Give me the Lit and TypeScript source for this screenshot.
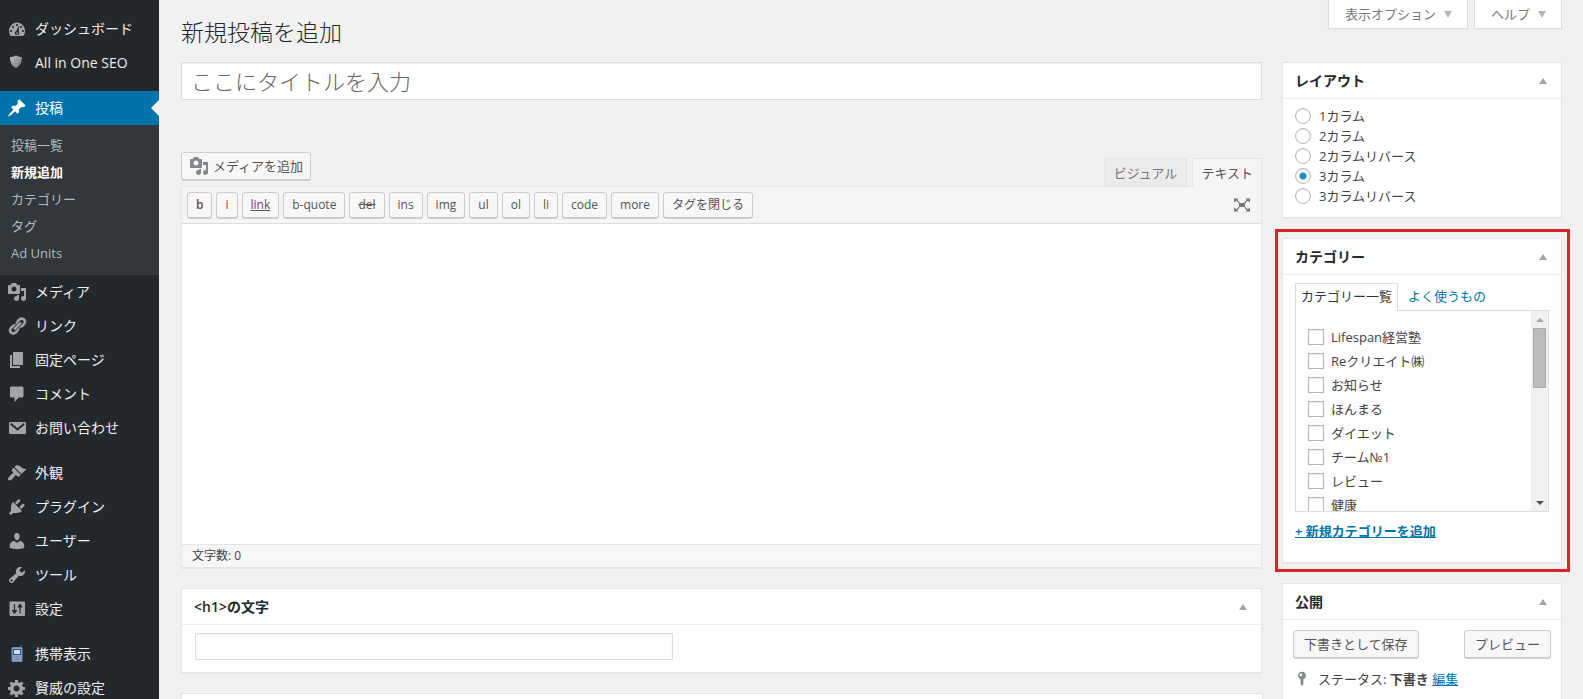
import { LitElement, html, svg, css, nothing } from "lit";
import { customElement, property, state } from "lit/decorators.js";
import { classMap } from "lit/directives/class-map.js";

const icons: Record<string, unknown> = {
  dashboard: svg`<path fill-rule="evenodd" d="M3.76 17h12.48c1.1-1.37 1.76-3.11 1.76-5 0-4.42-3.58-8.500-8-8.500s-8 4.080-8 8.500c0 1.890.66 3.630 1.760 5zM10 5c.55 0 1 .45 1 1s-.45 1-1 1-1-.45-1-1 .45-1 1-1zM6 7c.55 0 1 .45 1 1s-.45 1-1 1-1-.45-1-1 .45-1 1-1zm8 0c.55 0 1 .45 1 1s-.45 1-1 1-1-.45-1-1 .45-1 1-1zM4 11c.55 0 1 .45 1 1s-.45 1-1 1-1-.45-1-1 .45-1 1-1zm12 0c.55 0 1 .45 1 1s-.45 1-1 1-1-.45-1-1 .45-1 1-1zM12 6.500l-.2 6.300c.4.400.500.900.500 1.300 0 1.200-1 2-2.300 2s-2.200-.9-2.200-2c0-1 .6-1.600 1.400-1.900zM10 13.200a.9.900 0 1 0 0 1.800.9.900 0 0 0 0-1.800z"/>`,
  shield: svg`<defs><linearGradient id="sh" x1="0" y1="0" x2="1" y2="1"><stop offset="0" stop-color="#c4c4c4"/><stop offset="1" stop-color="#6c6c6c"/></linearGradient></defs><path fill="url(#sh)" stroke="#17191b" stroke-width="1" d="M8 .8c2 1.200 4.200 1.700 6.500 1.700.3 5.500-1.700 9.700-6.500 12.300C3.200 12.200 1.200 8 1.500 2.500 3.800 2.500 6 2 8 .8z"/>`,
  post: svg`<path d="M10.44 3.02l1.82-1.82 6.36 6.35-1.83 1.82c-1.05-.68-2.48-.57-3.41.36l-.75.75c-.92.93-1.04 2.35-.35 3.41l-1.83 1.82-2.41-2.41-2.8 2.79c-.42.42-3.38 2.71-3.8 2.29s1.86-3.39 2.28-3.81l2.79-2.79L4.1 9.36l1.83-1.82c1.05.69 2.48.57 3.4-.36l.75-.75c.93-.92 1.05-2.35.36-3.41z"/>`,
  media: svg`<path fill-rule="evenodd" d="M13 11V4c0-.55-.45-1-1-1h-1.67L9 1H5L3.67 3H2c-.55 0-1 .45-1 1v7c0 .55.45 1 1 1h10c.55 0 1-.45 1-1zM7 4.500c1.380 0 2.500 1.120 2.500 2.500S8.380 9.500 7 9.500 4.500 8.380 4.500 7 5.620 4.500 7 4.500zM14 6h5v10.500c0 1.380-1.120 2.500-2.500 2.500S14 17.880 14 16.500s1.120-2.500 2.500-2.500c.17 0 .34.02.5.05V9h-3V6zm-4 8.050V13h2v3.500c0 1.380-1.120 2.500-2.500 2.500S7 17.880 7 16.500 8.120 14 9.500 14c.17 0 .34.02.5.05z"/>`,
  link: svg`<path stroke="currentColor" stroke-width=".5" d="M17.74 2.76c1.68 1.69 1.68 4.41 0 6.1l-1.53 1.52c-1.12 1.12-2.7 1.47-4.14 1.09l2.62-2.61.76-.77.76-.76c.84-.84.84-2.2 0-3.04-.84-.85-2.2-.85-3.04 0l-.77.76-3.38 3.38c-.37-1.44-.02-3.02 1.1-4.14l1.52-1.53c1.69-1.68 4.42-1.68 6.1 0zM8.59 13.43l5.34-5.34c.42-.42.42-1.1 0-1.52-.44-.43-1.13-.39-1.53 0l-5.33 5.34c-.42.42-.42 1.1 0 1.52.44.43 1.13.39 1.52 0zm-.76 2.29l4.14-4.15c.38 1.44.03 3.02-1.09 4.14l-1.52 1.53c-1.69 1.68-4.41 1.68-6.1 0-1.68-1.68-1.68-4.42 0-6.1l1.53-1.52c1.12-1.12 2.7-1.47 4.14-1.1l-4.14 4.15c-.85.84-.85 2.2 0 3.05.84.84 2.2.84 3.04 0z"/>`,
  page: svg`<path d="M6 15V2h10v13H6zm-1 1h8v2H3V5h2v11z"/>`,
  comment: svg`<path d="M4.500 2.500h10.500c.8 0 1.500.7 1.500 1.500v8c0 .8-.7 1.500-1.500 1.500h-3.200L7.500 18v-4.500h-3C3.700 13.500 3 12.800 3 12V4c0-.8.700-1.500 1.500-1.500z"/>`,
  mail: svg`<rect x="2" y="4" width="17" height="12" rx="1.300"/><path d="M3.800 5.800l6.700 5.700 6.700-5.700" fill="none" stroke="#23282d" stroke-width="1.800"/>`,
  brush: svg`<path d="M14.48 11.06L7.41 3.99l1.5-1.5c.5-.56 2.3-.47 3.51.32 1.21.8 1.43 1.28 2.91 2.1 1.18.64 2.45 1.26 4.45.85zm-.71.71L6.7 4.7 4.93 6.47c-.39.39-.39 1.02 0 1.41l1.06 1.06c.39.39.39 1.03 0 1.42-.6.6-1.43 1.11-2.21 1.69-.35.26-.7.53-1.01.84C1.43 14.23.4 16.08 1.4 17.07c.99 1 2.84-.03 4.18-1.36.31-.31.58-.66.85-1.02.57-.78 1.08-1.61 1.69-2.21.39-.39 1.02-.39 1.41 0l1.06 1.06c.39.39 1.02.39 1.41 0z"/>`,
  plugin: svg`<path d="M13.11 4.36L9.87 7.6 8 5.73l3.24-3.24c.35-.34 1.05-.2 1.56.32.52.51.66 1.21.31 1.55zm-8 1.77l.91-1.12 9.01 9.01-1.19.84c-.71.71-2.63 1.16-3.82 1.16H6.14L4.9 17.26c-.59.59-1.54.59-2.12 0-.59-.58-.59-1.53 0-2.12l1.24-1.24v-3.88c0-1.13.4-3.19 1.09-3.89zm7.26 3.97l3.24-3.24c.34-.35 1.04-.21 1.55.31.52.51.66 1.21.31 1.55l-3.24 3.25z"/>`,
  user: svg`<path d="M10 9.250c-2.270 0-2.730-3.440-2.730-3.440C7 4.020 7.820 2 9.970 2c2.160 0 2.980 2.020 2.710 3.810 0 0-.41 3.440-2.680 3.440zm0 2.570L12.720 10c2.390 0 4.520 2.330 4.520 4.530v2.490s-3.650 1.130-7.240 1.130c-3.650 0-7.240-1.130-7.240-1.130v-2.490c0-2.250 1.940-4.480 4.470-4.480z"/>`,
  wrench: svg`<path fill-rule="evenodd" d="M16.68 9.77c-1.34 1.34-3.3 1.67-4.95.99l-5.41 6.52c-.99.99-2.59.99-3.58 0s-.99-2.59 0-3.57l6.52-5.42c-.68-1.65-.35-3.61.99-4.95 1.28-1.28 3.12-1.62 4.72-1.06l-2.89 2.89 2.82 2.82 2.86-2.87c.53 1.58.18 3.39-1.08 4.65zM3.81 16.21c.4.39 1.04.39 1.43 0 .4-.4.4-1.04 0-1.43-.39-.4-1.03-.4-1.43 0-.39.39-.39 1.03 0 1.43z"/>`,
  settings: svg`<rect x="2.500" y="2.500" width="15.500" height="14.500" rx="1"/><path d="M7.500 5v9.500M5 11.500h5M7.500 14.500l-2-3M7.500 14.500l2-3M13 5v9.500M10.700 8h4.600M13 5l-1.700 3M13 5l1.700 3" fill="none" stroke="#23282d" stroke-width="1.200"/>`,
  phone: svg`<path d="M13.300 1.500h1.500V5h-1.500z" fill="#3d6cb4"/><rect x="4.500" y="3" width="11" height="15" rx="1.500" fill="#6f8db8"/><rect x="5.500" y="4" width="9" height="13" rx="1" fill="#8ea5c6"/><rect x="6.500" y="5.500" width="7" height="5" fill="#d4dfec" stroke="#31527f" stroke-width="1"/><path d="M7 13h6M7 15.300h6" stroke="#7189ad" stroke-width="1.200"/>`,
  gear: svg`<path fill-rule="evenodd" d="M18 12h-2.180c-.17.7-.44 1.350-.81 1.930l1.540 1.540-2.100 2.100-1.540-1.540c-.58.36-1.230.63-1.910.79V19H8v-2.180c-.68-.16-1.330-.43-1.910-.79l-1.540 1.540-2.120-2.120 1.540-1.540c-.36-.58-.63-1.230-.79-1.910H1V9.030h2.170c.16-.7.44-1.350.8-1.940L2.430 5.550l2.100-2.100 1.540 1.540c.58-.37 1.240-.64 1.930-.81V2h3v2.180c.68.16 1.330.43 1.910.79l1.540-1.540 2.120 2.120-1.540 1.540c.36.59.64 1.240.8 1.940H18V12zm-8.500 1.500c1.660 0 3-1.340 3-3s-1.340-3-3-3-3 1.340-3 3 1.340 3 3 3z"/>`,
  expand: svg`<path d="M7 8h6v4H7zM2 3.500h4.500L5.200 4.800l2.500 2.500-.9.900-2.500-2.500L2 7.500zM18 3.500h-4.500l1.300 1.300-2.500 2.500.9.900 2.500-2.500L18 7.500zM2 16.500h4.500l-1.300-1.300 2.500-2.500-.9-.9-2.500 2.500L2 12.500zM18 16.500h-4.500l1.300-1.300-2.500-2.500.9-.9 2.500 2.500L18 12.500z"/>`,
  pin: svg`<path fill-rule="evenodd" d="M10 2a4.300 4.300 0 0 1 1.500 8.300v5.200L10 18l-1.500-2.500v-5.200A4.300 4.300 0 0 1 10 2zm-1.200 2a1.500 1.500 0 1 0 0 3 1.500 1.500 0 0 0 0-3z"/>`,
};

const icon = (name: string, size = 20) =>
  html`<svg class="icon" width=${size} height=${size} viewBox=${name === "shield" ? "-1 -1 20 20" : "0 0 20 20"} fill="currentColor" aria-hidden="true">${icons[name]}</svg>`;

const base = css`
  *, *::before, *::after { box-sizing: border-box; }
  button, input, textarea { font: inherit; color: inherit; margin: 0; }
  ul { list-style: none; margin: 0; padding: 0; }
  a { color: #0073aa; }
  .icon { display: block; flex: none; }
`;

interface MenuItem { label: string; icon: string; sub?: string[]; }

const menu: MenuItem[][] = [
  [{ label: "ダッシュボード", icon: "dashboard" }, { label: "All in One SEO", icon: "shield" }],
  [
    { label: "投稿", icon: "post", sub: ["投稿一覧", "新規追加", "カテゴリー", "タグ", "Ad Units"] },
    { label: "メディア", icon: "media" },
    { label: "リンク", icon: "link" },
    { label: "固定ページ", icon: "page" },
    { label: "コメント", icon: "comment" },
    { label: "お問い合わせ", icon: "mail" },
  ],
  [
    { label: "外観", icon: "brush" },
    { label: "プラグイン", icon: "plugin" },
    { label: "ユーザー", icon: "user" },
    { label: "ツール", icon: "wrench" },
    { label: "設定", icon: "settings" },
  ],
  [{ label: "携帯表示", icon: "phone" }, { label: "賢威の設定", icon: "gear" }],
];

@customElement("admin-menu")
export class AdminMenu extends LitElement {
  static styles = [base, css`
    :host { display: block; background: #23282d; font-size: 14px; line-height: 18px; overflow: auto; scrollbar-width: none; }
    .nav { display: flex; flex-direction: column; gap: 11px; padding: 12px 0; }
    .item { display: flex; align-items: center; gap: 8px; height: 34px; padding: 0 7px; color: #eee; text-decoration: none; }
    .item .icon { color: #a0a5aa; }
    .current { background: #0073aa; color: #fff; }
    .current .icon { color: #fff; }
    .current::after { content: ""; margin-left: auto; margin-right: -7px; border: 8px solid transparent; border-right-color: #f1f1f1; border-left: 0; }
    .sub { background: #32373c; padding: 7px 0 8px; font-size: 13px; }
    .sub a { display: block; padding: 0 11px; line-height: 27px; color: #b4b9be; text-decoration: none; }
    .sub .on { color: #fff; font-weight: 700; }
  `];

  render() {
    return html`<nav class="nav" aria-label="メインメニュー">
      ${menu.map((group) => html`<ul>${group.map((m) => html`<li>
        <a href="#" class=${classMap({ item: true, current: !!m.sub })}>${icon(m.icon)}<span>${m.label}</span></a>
        ${m.sub ? html`<ul class="sub">${m.sub.map((s) => html`<li><a href="#" class=${s === "新規追加" ? "on" : ""}>${s}</a></li>`)}</ul>` : nothing}
      </li>`)}</ul>`)}
    </nav>`;
  }
}

@customElement("post-box")
export class PostBox extends LitElement {
  @property() heading = "";
  static styles = [base, css`
    :host { display: block; background: #fff; border: 1px solid #e5e5e5; box-shadow: 0 1px 1px rgba(0, 0, 0, 0.04); }
    .head { display: flex; align-items: center; justify-content: space-between; border-bottom: 1px solid #eee; height: 36px; padding: 0 12px; }
    .title { margin: 0; font-size: 14px; line-height: 20px; font-weight: 600; color: #23282d; }
    .toggle { border: 0; background: none; padding: 2px; display: flex; }
    .arrow { border: 4px solid transparent; border-bottom: 6px solid #a0a5aa; border-top: 0; }
  `];
  render() {
    return html`<div class="head"><h2 class="title">${this.heading}</h2>
      <button class="toggle" type="button" aria-label="パネルを切り替え"><span class="arrow"></span></button></div><slot></slot>`;
  }
}

const layouts = ["1カラム", "2カラム", "2カラムリバース", "3カラム", "3カラムリバース"];
const categories = ["Lifespan経営塾", "Reクリエイト㈱", "お知らせ", "ほんまる", "ダイエット", "チーム№1", "レビュー", "健康"];
const quicktags = ["b", "i", "link", "b-quote", "del", "ins", "img", "ul", "ol", "li", "code", "more", "タグを閉じる"];

@customElement("app-root")
export class AppRoot extends LitElement {
  @state() private layout = "3カラム";

  static styles = [base, css`
    :host {
      display: grid; grid-template-columns: 159px minmax(0, 1fr); height: 100vh; background: #f1f1f1; color: #444;
      font-family: "Open Sans", "Noto Sans CJK JP", sans-serif; font-size: 13px; line-height: 20px;
    }
    .page { overflow: auto; scrollbar-width: none; padding: 0 21px 0 22px; }
    .top { display: flex; justify-content: space-between; align-items: flex-start; height: 62px; }
    .top h1 { margin: 0; padding-top: 16px; font-size: 23px; line-height: 32px; font-weight: 300; color: #23282d; }
    .meta { display: flex; gap: 6px; }
    .meta button { display: flex; align-items: center; gap: 8px; height: 29px; padding: 0 15px 0 16px; background: #fff; border: 1px solid #ddd; border-top: 0; box-shadow: 0 1px 1px rgba(0, 0, 0, 0.04); color: #777; }
    .meta button::after { content: ""; border: 4px solid transparent; border-top: 7px solid #b4b9be; border-bottom: 0; }
    .cols { display: grid; grid-template-columns: minmax(0, 1fr) 280px; gap: 20px; align-items: start; }
    .stack { display: flex; flex-direction: column; gap: 20px; min-width: 0; }
    .field { background: #fff; border: 1px solid #ddd; box-shadow: inset 0 1px 2px rgba(0, 0, 0, 0.07); border-radius: 0; outline: 0; }
    .subject { display: block; width: 100%; height: 38px; padding: 0 9px; font-size: 22px; font-weight: 300; }
    .subject::placeholder { color: #666; opacity: 1; }
    .editor { margin-top: 52px; }
    .bar { display: flex; justify-content: space-between; align-items: flex-end; height: 34px; }
    .btn { display: flex; align-items: center; justify-content: center; background: #f7f7f7; border: 1px solid #ccc; border-radius: 3px; box-shadow: 0 1px 0 #ccc; color: #555; height: 28px; padding: 0 10px; white-space: nowrap; }
    .media { gap: 4px; padding: 0 7px; align-self: flex-start; }
    .media .icon { color: #82878c; }
    .tabs { display: flex; gap: 5px; }
    .tabs button { height: 28px; padding: 0 9px; border: 1px solid #e5e5e5; border-bottom: 0; background: #ebebeb; color: #777; }
    .tabs .active { background: #f5f5f5; color: #555; margin-bottom: -1px; height: 29px; padding: 0 8px; position: relative; }
    .frame { border: 1px solid #e5e5e5; box-shadow: 0 1px 1px rgba(0, 0, 0, 0.04); }
    .tools { display: flex; align-items: center; gap: 4px; padding: 5px; background: #f5f5f5; border-bottom: 1px solid #ddd; }
    .tag { height: 26px; padding: 0 8px; font-size: 12px; }
    .b { font-weight: 600; }
    .link { text-decoration: underline; }
    .del { text-decoration: line-through; }
    .full { margin-left: auto; border: 0; background: none; padding: 0 4px; color: #777; }
    .text { display: block; width: 100%; height: 320px; border: 0; outline: 0; resize: none; padding: 10px; background: #fff; }
    .status { border-top: 1px solid #e5e5e5; background: #f7f7f7; padding: 0 10px 1px; font-size: 12px; line-height: 21px; }
    .h1box { padding: 8px 13px 12px; }
    .h1box .field { display: block; width: 478px; max-width: 100%; height: 27px; padding: 0 6px; }
    .next { margin-right: -1px; }
    .radios { padding: 7px 12px 11px; }
    .row { display: flex; align-items: center; gap: 8px; }
    .radio { appearance: none; flex: none; width: 16px; height: 16px; border: 1px solid #b4b9be; border-radius: 50%; background: #fff; box-shadow: inset 0 1px 2px rgba(0, 0, 0, 0.1); }
    .radio:checked { background: radial-gradient(circle, #1e8cbe 3px, #fff 4px); }
    .marked { position: relative; }
    .outline { position: absolute; inset: -10px -9px -10px -8px; border: 3px solid #dc232c; pointer-events: none; }
    .cats { padding: 8px 12px 21px; }
    .cattabs { display: flex; }
    .cattabs a { height: 27px; line-height: 24px; padding: 0 5px; border: 1px solid transparent; border-bottom: 0; text-decoration: none; }
    .cattabs .active { color: #32373c; border-color: #ddd; background: #fdfdfd; height: 28px; margin-bottom: -1px; position: relative; }
    .cattabs a + a { padding-left: 9px; }
    .panel { display: flex; height: 202px; border: 1px solid #ddd; background: #fdfdfd; }
    .list { flex: 1; overflow: auto; scrollbar-width: none; padding: 14px 12px; }
    .list .row { height: 24px; gap: 7px; }
    .check { appearance: none; flex: none; width: 16px; height: 16px; border: 1px solid #b4b9be; background: #fff; box-shadow: inset 0 1px 2px rgba(0, 0, 0, 0.1); }
    .scroll { display: flex; flex-direction: column; align-items: center; width: 17px; background: #f1f1f1; }
    .up, .down { display: grid; place-items: center; height: 17px; }
    .up::before { content: ""; border: 4px solid transparent; border-top: 0; border-bottom-color: #a3a3a3; }
    .down { margin-top: auto; }
    .down::before { content: ""; border: 4px solid transparent; border-bottom: 0; border-top-color: #505050; }
    .thumb { width: 13px; height: 60px; background: #bcbcbc; border: 1px solid #a8a8a8; }
    .add { display: inline-block; margin-top: 9px; font-weight: 600; }
    .publish { padding: 10px; display: flex; flex-direction: column; gap: 11px; }
    .actions { display: flex; justify-content: space-between; }
    .state { display: flex; align-items: center; gap: 7px; }
    .state .icon { color: #82878c; }
    .state b { color: #444; font-weight: 600; }
  `];

  render() {
    return html`
      <admin-menu></admin-menu>
      <main class="page">
        <header class="top">
          <h1>新規投稿を追加</h1>
          <div class="meta"><button type="button">表示オプション</button><button type="button">ヘルプ</button></div>
        </header>
        <div class="cols">
          <div class="stack">
            <div>
              <input class="field subject" type="text" placeholder="ここにタイトルを入力" aria-label="タイトル" />
              <div class="editor">
                <div class="bar">
                  <button class="btn media" type="button">${icon("media", 20)}メディアを追加</button>
                  <div class="tabs"><button type="button">ビジュアル</button><button type="button" class="active">テキスト</button></div>
                </div>
                <div class="frame">
                  <div class="tools">
                    ${quicktags.map((t) => html`<button type="button" class=${classMap({ btn: true, tag: true, b: t === "b", link: t === "link", del: t === "del" })}>${t}</button>`)}
                    <button class="full" type="button" aria-label="集中執筆モード">${icon("expand", 20)}</button>
                  </div>
                  <textarea class="text" aria-label="本文"></textarea>
                  <div class="status">文字数: 0</div>
                </div>
              </div>
            </div>
            <post-box heading="<h1>の文字"><div class="h1box"><input class="field" type="text" aria-label="h1の文字" /></div></post-box>
            <post-box class="next"></post-box>
          </div>
          <aside class="stack">
            <post-box heading="レイアウト">
              <div class="radios">
                ${layouts.map((l) => html`<label class="row"><input class="radio" type="radio" name="layout" .checked=${this.layout === l} @change=${() => (this.layout = l)} />${l}</label>`)}
              </div>
            </post-box>
            <post-box class="marked" heading="カテゴリー">
              <div class="cats">
                <div class="cattabs"><a href="#" class="active">カテゴリー一覧</a><a href="#">よく使うもの</a></div>
                <div class="panel">
                  <div class="list">${categories.map((c) => html`<label class="row"><input class="check" type="checkbox" />${c}</label>`)}</div>
                  <div class="scroll" aria-hidden="true"><span class="up"></span><span class="thumb"></span><span class="down"></span></div>
                </div>
                <a class="add" href="#">+ 新規カテゴリーを追加</a>
              </div>
              <div class="outline"></div>
            </post-box>
            <post-box heading="公開">
              <div class="publish">
                <div class="actions"><button class="btn" type="button">下書きとして保存</button><button class="btn" type="button">プレビュー</button></div>
                <div class="state">${icon("pin", 18)}<span>ステータス: <b>下書き</b> <a href="#">編集</a></span></div>
              </div>
            </post-box>
          </aside>
        </div>
      </main>`;
  }
}
